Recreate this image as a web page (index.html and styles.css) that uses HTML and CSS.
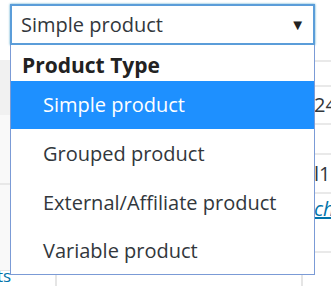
FILE: index.html
```html
<!DOCTYPE html>
<html lang="en">
<head>
    <meta charset="UTF-8">
    <title>Product type</title>
    <link rel="stylesheet" href="styles.css">
</head>
<body>
    <div class="page">
        <div class="side-left">
            <div class="blk gray"></div>
            <div class="blk light"></div>
            <div class="blk light2"></div>
            <div class="tabs-link">ts</div>
        </div>
        <div class="bottom-box"><span>&ndash;</span></div>
        <div class="side-right">
            <div class="cell c1"></div>
            <div class="cell c2"><span>24</span></div>
            <div class="cell c3"></div>
            <div class="cell c4"><span>l1</span></div>
            <div class="cell c5"><a href="#">ch</a></div>
            <div class="cell c6"></div>
        </div>
    </div>

    <div class="select-wrap">
        <div class="select">
            <span>Simple product</span>
            <span class="arrow">&#9660;</span>
        </div>
        <ul class="menu">
            <li class="group">Product Type</li>
            <li class="option active">Simple product</li>
            <li class="option">Grouped product</li>
            <li class="option">External/Affiliate product</li>
            <li class="option last">Variable product</li>
        </ul>
    </div>
</body>
</html>
```

FILE: styles.css
```css
body {
    margin: 0;
    background-color: #fff;
    font-family: "Open Sans", "Noto Sans", sans-serif;
    color: #32373c;
    overflow: hidden;
}

.page {
    position: relative;
    height: 286px;
    display: flex;
    justify-content: space-between;
}

.side-left {
    width: 40px;
    padding-top: 60px;
}

.blk.gray {
    height: 55px;
    background-color: #f1f1f1;
}

.blk.light {
    height: 68px;
    background-color: #f9f9f9;
    border-bottom: 2px solid #e8e8e8;
}

.blk.light2 {
    height: 85px;
    background-color: #f9f9f9;
    border-bottom: 1px solid #e5e5e5;
}

.tabs-link {
    font-size: 17px;
    line-height: 16px;
    color: #0073aa;
    margin-left: -3px;
    margin-top: -3px;
}

.bottom-box {
    position: absolute;
    left: 55px;
    top: 275px;
    width: 244px;
    height: 20px;
    border-left: 2px solid #e5e5e5;
    border-right: 2px solid #e5e5e5;
    font-size: 16px;
}

.bottom-box span {
    margin-left: 18px;
}

.side-right {
    width: 40px;
    padding-top: 60px;
    font-size: 20px;
}

.cell {
    box-sizing: border-box;
    border-top: 2px solid #e9e9e9;
    line-height: 20px;
    padding-left: 23px;
}

.c1 { height: 25px; }
.c2 { height: 38px; padding-top: 8px; }
.c3 { height: 30px; }
.c4 { height: 39px; padding-top: 9px; }
.c5 { height: 59px; padding-top: 5px; }
.c6 { height: 30px; }

.c2 span,
.c4 span {
    color: #32373c;
}

.c5 a {
    color: #0073aa;
    font-style: italic;
}

.select-wrap {
    position: absolute;
    left: 10px;
    top: 4px;
    width: 305px;
}

.select {
    height: 37px;
    border: 2px solid #5b9dd9;
    box-shadow: 0 0 2px rgba(30, 140, 190, 0.8);
    background-color: #fff;
    display: flex;
    align-items: center;
    justify-content: space-between;
    padding: 0 8px 0 9px;
    font-size: 20px;
    color: #32373c;
}

.arrow {
    font-size: 15px;
    color: #222;
    margin-bottom: 2px;
}

.menu {
    list-style: none;
    margin: 0;
    padding: 0;
    background-color: #fff;
    border: 1px solid #7b9bd6;
    border-top: none;
    width: 303px;
}

.menu li {
    font-size: 20px;
    white-space: nowrap;
}

.menu .group {
    height: 36px;
    line-height: 40px;
    padding-left: 11px;
    font-size: 21px;
    font-weight: bold;
    color: #222;
}

.menu .option {
    height: 49px;
    line-height: 49px;
    padding-left: 32px;
    color: #32373c;
}

.menu .option.active {
    height: 48px;
    line-height: 48px;
    background-color: #1e90ff;
    color: #fff;
}

.menu .option.last {
    height: 47px;
    line-height: 47px;
}
```
